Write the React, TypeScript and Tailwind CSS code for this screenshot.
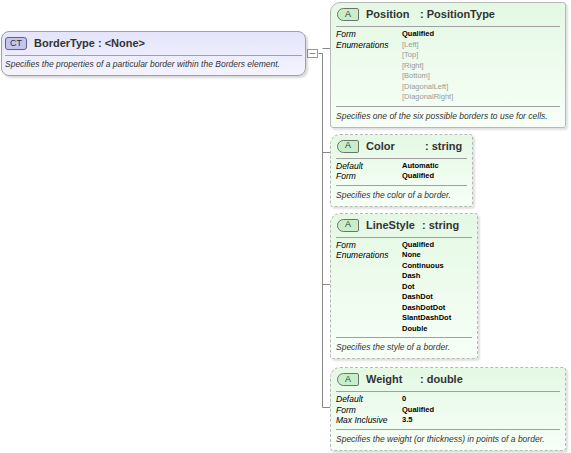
const F = { fontFamily: '"Liberation Sans", Arial, sans-serif' };

type Row = [string, string[], boolean?];

function Attr({ name, type, rows, desc, dashed, w, nameW }: { name: string; type: string; rows: Row[]; desc: string; dashed?: boolean; w: string; nameW: string }) {
  return (
    <div className={`${w} rounded-tl-[10px] rounded-[3px] border ${dashed ? "border-dashed" : ""} border-[#b8b8b8] bg-gradient-to-b from-[#e4f8e4] to-[#f7fff7] shadow-[2px_2px_2px_rgba(0,0,0,0.12)] px-[5px]`}>
      <div className="flex items-center h-[23px] pl-[1px] whitespace-nowrap">
        <span className="flex items-center justify-center w-[22px] h-[13px] rounded-l-[7px] rounded-r-[2px] border border-[#707070] bg-[#c8f0c8] text-[9px] text-[#333] mr-[7px]">A</span>
        <span className={`${nameW} text-[11px] font-bold text-[#333]`}>{name}</span>
        <span className="text-[11px] font-bold text-[#333]">: {type}</span>
      </div>
      <div className="border-t border-[#a0a0a0] pt-[2px] pb-[3px]">
        {rows.map(([k, vs, grey], i) => (
          <div key={i} className="flex">
            <span className="w-[66px] text-[8.5px] italic leading-[10.5px] text-black">{k}</span>
            <div className="flex flex-col">
              {vs.map((v) => (
                <span key={v} className={`text-[7.5px] leading-[10.5px] ${grey ? "text-[#999]" : "font-bold text-black"}`}>{v}</span>
              ))}
            </div>
          </div>
        ))}
      </div>
      <div className="border-t border-[#a0a0a0] text-[8.5px] italic leading-[10px] text-[#333] pt-[4px] pb-[6px] whitespace-nowrap">{desc}</div>
    </div>
  );
}

export default function App() {
  return (
    <div className="relative w-[571px] h-[453px] bg-white overflow-hidden" style={F}>
      <svg className="absolute left-0 top-0" width="571" height="453">
        <g stroke="#888" strokeWidth="1" fill="none">
          <path d="M318.5 53.5 H322.5 V407.5" />
          <path d="M322.5 48.5 H330" />
          <path d="M322.5 152.5 H330" />
          <path d="M322.5 284.5 H330" />
          <path d="M322.5 407.5 H330" />
        </g>
        <rect x="307.5" y="49.5" width="10" height="8" fill="white" stroke="#999" />
        <path d="M309.5 53.5 H315.5" stroke="#888" />
      </svg>
      <div className="flex">
        <div className="pt-[31px] pl-[1px]">
          <div className="relative w-[305px] rounded-[8px] border border-[#a0a0a0] bg-gradient-to-b from-[#e4e4fb] to-[#f4f4ff] shadow-[2px_2px_2px_rgba(0,0,0,0.15)] px-[3px]">
            <div className="flex items-center h-[23px]">
              <span className="flex items-center justify-center w-[22px] h-[13px] rounded-[3px] border border-[#606090] bg-[#c4c4f0] text-[9px] text-[#333] mr-[7px]">CT</span>
              <span className="text-[11px] font-bold text-[#333]">BorderType : &lt;None&gt;</span>
            </div>
            <div className="border-t border-[#a0a0a0] text-[8.5px] italic leading-[10px] text-[#333] pt-[3px] pb-[6px] whitespace-nowrap">Specifies the properties of a particular border within the Borders element.</div>
          </div>
        </div>
        <div className="ml-[24px] pt-[2px] flex flex-col items-start gap-[6px]">
          <Attr w="w-[236px]" nameW="w-[54px]" name="Position" type="PositionType" rows={[["Form", ["Qualified"]], ["Enumerations", ["[Left]", "[Top]", "[Right]", "[Bottom]", "[DiagonalLeft]", "[DiagonalRight]"], true]]} desc="Specifies one of the six possible borders to use for cells." />
          <Attr dashed w="w-[143px]" nameW="w-[59px]" name="Color" type="string" rows={[["Default", ["Automatic"]], ["Form", ["Qualified"]]]} desc="Specifies the color of a border." />
          <Attr dashed w="w-[148px]" nameW="w-[56px]" name="LineStyle" type="string" rows={[["Form", ["Qualified"]], ["Enumerations", ["None", "Continuous", "Dash", "Dot", "DashDot", "DashDotDot", "SlantDashDot", "Double"]]]} desc="Specifies the style of a border." />
          <div className="pt-[2px]">
            <Attr dashed w="w-[236px]" nameW="w-[54px]" name="Weight" type="double" rows={[["Default", ["0"]], ["Form", ["Qualified"]], ["Max Inclusive", ["3.5"]]]} desc="Specifies the weight (or thickness) in points of a border." />
          </div>
        </div>
      </div>
    </div>
  );
}
